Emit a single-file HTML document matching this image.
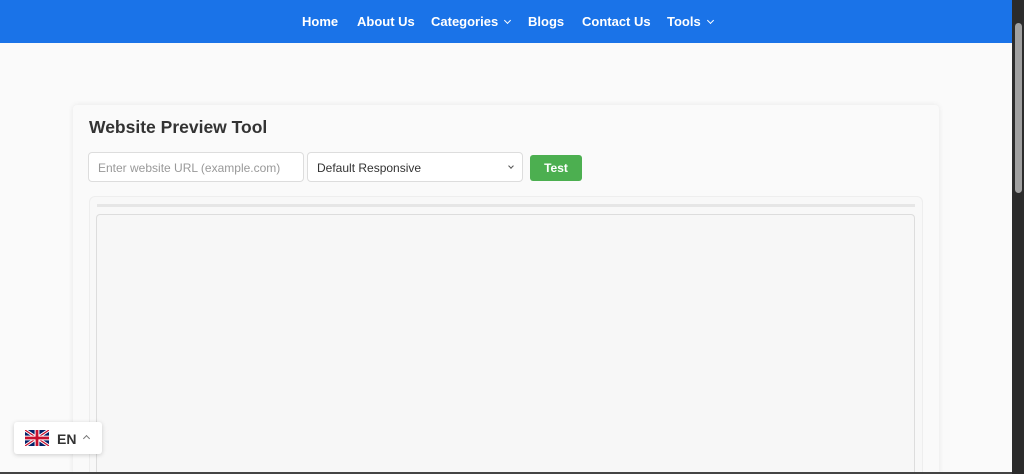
<!DOCTYPE html>
<html><head><meta charset="utf-8"><style>
*{box-sizing:border-box;margin:0;padding:0}
html,body{width:1024px;height:474px;overflow:hidden}
body{background:#fafafa;font-family:"Liberation Sans",sans-serif;position:relative}
.nav{position:absolute;left:0;top:0;width:1012px;height:43px;background:#1a73e8;color:#fff;font-size:13px;font-weight:bold}
.nav span{position:absolute;top:14px}
.chev{display:inline-block;width:5px;height:5px;border-right:1.3px solid #fff;border-bottom:1.3px solid #fff;transform:rotate(45deg);margin-left:7px;position:relative;top:-3px}
.sb{position:absolute;left:1012px;top:0;width:12px;height:474px;background:#2b2b2b}
.thumb{position:absolute;left:1015px;top:23px;width:7px;height:170px;background:#a0a0a0;border-radius:4px}
.card{position:absolute;left:73px;top:105px;width:866px;height:369px;background:#fafafa;box-shadow:0 0 6px rgba(0,0,0,.08);border-radius:4px 4px 0 0}
h1{position:absolute;left:89px;top:117px;font-size:17.5px;color:#333;font-weight:bold}
.inp{position:absolute;top:152px;height:30px;border:1px solid #ddd;border-radius:4px;background:#fff;font-size:12px;padding:8px 9px}
.btn{position:absolute;left:530px;top:155px;width:52px;height:26px;background:#4caf50;color:#fff;border-radius:3px;font-size:12px;font-weight:bold;text-align:center;line-height:26px}
.box{position:absolute;left:89px;top:196px;width:834px;height:278px;border:1px solid #eee;border-bottom:none;border-radius:6px 6px 0 0;background:#f8f8f8}
.bar{position:absolute;left:97px;top:204px;width:818px;height:3px;background:#e6e6e6}
.frame{position:absolute;left:96px;top:214px;width:819px;height:260px;border:1px solid #ddd;border-bottom:none;border-radius:4px 4px 0 0;background:#f7f7f7}
.lang{position:absolute;left:14px;top:422px;width:88px;height:32px;background:#fff;box-shadow:0 1px 5px rgba(0,0,0,.18);border-radius:3px}
.bot{position:absolute;left:0;top:472px;width:1012px;height:2px;background:#444}
</style></head><body>
<div class="nav">
<span style="left:302px">Home</span>
<span style="left:357px">About Us</span>
<span style="left:431px">Categories<i class="chev"></i></span>
<span style="left:528px">Blogs</span>
<span style="left:582px">Contact Us</span>
<span style="left:667px">Tools<i class="chev"></i></span>
</div>
<div class="card"></div>
<h1>Website Preview Tool</h1>
<div class="inp" style="left:88px;width:216px;color:#999">Enter website URL (example.com)</div>
<div class="inp" style="left:307px;width:216px;color:#333">Default Responsive<i class="chev" style="border-color:#555;position:absolute;right:9px;top:11px;width:4px;height:4px;border-width:1px"></i></div>
<div class="btn">Test</div>
<div class="box"></div>
<div class="bar"></div>
<div class="frame"></div>
<div class="lang">
<svg style="position:absolute;left:11px;top:8px" width="24" height="16" viewBox="0 0 60 40"><rect width="60" height="40" fill="#012169"/><path d="M0,0L60,40M60,0L0,40" stroke="#fff" stroke-width="8"/><path d="M0,0L60,40M60,0L0,40" stroke="#C8102E" stroke-width="3"/><path d="M30,0V40M0,20H60" stroke="#fff" stroke-width="12"/><path d="M30,0V40M0,20H60" stroke="#C8102E" stroke-width="7"/></svg>
<span style="position:absolute;left:43px;top:9px;font-size:14px;font-weight:bold;color:#333">EN</span>
<i style="position:absolute;left:70px;top:14px;width:5px;height:5px;border-left:1.3px solid #777;border-top:1.3px solid #777;transform:rotate(45deg)"></i>
</div>
<div class="bot"></div>
<div class="sb"></div><div class="thumb"></div>
</body></html>
